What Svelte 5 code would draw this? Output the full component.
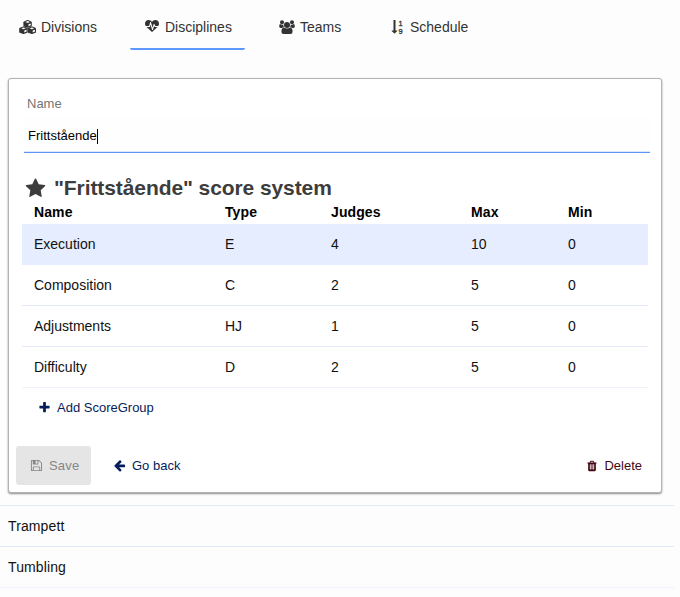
<script>
  const tabs = [
    { label: 'Divisions', icon: 'cubes' },
    { label: 'Disciplines', icon: 'heartbeat' },
    { label: 'Teams', icon: 'users' },
    { label: 'Schedule', icon: 'sort' },
  ];
  const scores = [
    ['Execution', 'E', 4, 10, 0],
    ['Composition', 'C', 2, 5, 0],
    ['Adjustments', 'HJ', 1, 5, 0],
    ['Difficulty', 'D', 2, 5, 0],
  ];
  const headings = ['Name', 'Type', 'Judges', 'Max', 'Min'];
  const others = ['Trampett', 'Tumbling'];
  const paths = {
    heartbeat: 'M1280 896h305q-5 6-10 10.5t-9 7.5l-3 4-623 600q-18 18-44 18t-44-18l-624-602q-5-2-21-20h369q22 0 39.5-13.5t22.5-34.5l70-281 190 667q6 20 23 33t39 13q21 0 38-13t23-33l146-485 56 112q18 35 57 35zm512-428q0 145-103 300h-369l-111-221q-8-17-25.5-27t-36.5-8q-45 5-56 46l-129 430-196-686q-6-20-23.5-33t-39.5-13-39 13.5-22 34.5l-116 464h-423q-103-155-103-300 0-220 127-344t351-124q62 0 126.5 21.5t120 58 95.5 68.5 76 68q36-36 76-68t95.5-68.5 120-58 126.5-21.5q224 0 351 124t127 344z',
    star: 'M1728 647q0 22-26 48l-363 354 86 500q1 7 1 20 0 21-10.5 35.5t-30.5 14.5q-19 0-40-12l-449-236-449 236q-22 12-40 12-21 0-31.5-14.5t-10.5-35.5q0-6 2-20l86-500-364-354q-25-27-25-48 0-37 56-46l502-73 225-455q19-41 49-41t49 41l225 455 502 73q56 9 56 46z',
    plus: 'M1600 736v192q0 40-28 68t-68 28h-416v416q0 40-28 68t-68 28h-192q-40 0-68-28t-28-68v-416h-416q-40 0-68-28t-28-68v-192q0-40 28-68t68-28h416v-416q0-40 28-68t68-28h192q40 0 68 28t28 68v416h416q40 0 68 28t28 68z',
    back: 'M1664 896v128q0 53-32.5 90.5t-84.5 37.5h-704l293 294q38 36 38 90t-38 90l-75 76q-37 37-90 37-52 0-91-37l-651-652q-37-37-37-90 0-52 37-91l651-650q38-38 91-38 52 0 90 38l75 74q38 38 38 91t-38 91l-293 293h704q52 0 84.5 37.5t32.5 90.5z',
    trash: 'M704 1376v-704q0-14-9-23t-23-9h-64q-14 0-23 9t-9 23v704q0 14 9 23t23 9h64q14 0 23-9t9-23zm256 0v-704q0-14-9-23t-23-9h-64q-14 0-23 9t-9 23v704q0 14 9 23t23 9h64q14 0 23-9t9-23zm256 0v-704q0-14-9-23t-23-9h-64q-14 0-23 9t-9 23v704q0 14 9 23t23 9h64q14 0 23-9t9-23zm-544-992h448l-48-117q-7-9-17-11h-317q-10 2-17 11zm928 32v64q0 14-9 23t-23 9h-96v948q0 83-47 143.5t-113 60.5h-832q-66 0-113-58.5t-47-141.5v-952h-96q-14 0-23-9t-9-23v-64q0-14 9-23t23-9h309l70-167q15-37 54-63t79-26h320q40 0 79 26t54 63l70 167h309q14 0 23 9t9 23z',
    save: 'M512 1536h768v-384h-768v384zm896 0h128v-896q0-14-10-38.5t-20-34.5l-281-281q-10-10-34-20t-39-10v416q0 40-28 68t-68 28h-576q-40 0-68-28t-28-68v-416h-128v1280h128v-416q0-40 28-68t68-28h832q40 0 68 28t28 68v416zm-384-928v-320q0-13-9.5-22.5t-22.5-9.5h-192q-13 0-22.5 9.5t-9.5 22.5v320q0 13 9.5 22.5t22.5 9.5h192q13 0 22.5-9.5t9.5-22.5zm640 32v928q0 40-28 68t-68 28h-1344q-40 0-68-28t-28-68v-1344q0-40 28-68t68-28h928q40 0 88 20t76 48l280 280q28 28 48 76t20 88z',
  };
  const cubes = [[4.2, 0], [0, 6.3], [8.4, 6.3]];
  let name = $state('Frittstående');
</script>

{#snippet icon(id, size)}
  <svg width={size} height={size} viewBox="0 0 1792 1792" fill="currentColor"><path d={paths[id]} /></svg>
{/snippet}

<div class="page">
  <nav>
    {#each tabs as tab, i}
      <a class="tab t{i}" class:active={i === 1}>
        {#if tab.icon === 'cubes'}
          <svg width="18" height="14" viewBox="0 0 18 14">
            {#each cubes as [x, y]}
              <g transform="translate({x} {y})">
                <path fill="currentColor" d="M4.2 .1Q4.5 0 4.8 .1L8 1.4Q8.6 1.7 8.6 2.3V5.6Q8.6 6.1 8.1 6.4L4.8 7.7Q4.5 7.8 4.2 7.7L.7 6.400Q.2 6.100.2 5.600V2.300Q.2 1.700.8 1.400Z" />
                <path fill="#fdfdfd" d="M4.500 1.100 6.800 2 4.500 2.900 2.200 2ZM5.300 4.300 7.600 3.400V5.300L5.300 6.300Z" />
              </g>
            {/each}
          </svg>
        {:else if tab.icon === 'users'}
          <svg width="16" height="14" viewBox="0 0 16 14" fill="currentColor">
            <circle cx="3" cy="2.2" r="2" /><circle cx="13" cy="2.2" r="2" />
            <path d="M1 4.1Q3 5.3 4.3 4.6 4.1 6 5 7.2 3.6 7.2 2.7 8H1.6Q.2 8 .2 6.6 .2 4.3 1 4.1ZM15 4.1Q13 5.3 11.7 4.6 11.9 6 11 7.2 12.4 7.2 13.3 8h1.1Q15.8 8 15.8 6.6 15.8 4.3 15 4.1Z" />
            <circle cx="8" cy="5" r="3" />
            <path d="M4.8 7.4Q8 9.6 11.2 7.4 13.6 7.7 13.6 11.7q0 2.2-2.2 2.2H4.6q-2.200 0-2.200-2.200 0-4 2.400-4.300Z" />
          </svg>
        {:else if tab.icon === 'sort'}
          <svg width="14" height="16" viewBox="0 0 14 16" fill="currentColor">
            <path d="M2.500 1h2v10.500H6.200q.4.100.1.500L3.700 14.500q-.2.200-.4 0L.7 12q-.3-.4.1-.5H2.500Z" />
            <text x="7.6" y="6.5">1</text><text x="7.6" y="15">9</text>
          </svg>
        {:else}
          {@render icon('heartbeat', 14)}
        {/if}
        <span>{tab.label}</span>
      </a>
    {/each}
  </nav>

  <section class="card">
    <label for="name">Name</label>
    <div class="field" id="name">{name}<i></i></div>
    <h2>{@render icon('star', 21)}<span>"{name}" score system</span></h2>
    <div class="grid head">
      {#each headings as h}<b>{h}</b>{/each}
    </div>
    {#each scores as row, i}
      <div class="grid row" class:selected={i === 0}>
        {#each row as cell}<span>{cell}</span>{/each}
      </div>
    {/each}
    <button class="add">{@render icon('plus', 13)}<span>Add ScoreGroup</span></button>
    <footer>
      <button class="save">{@render icon('save', 13)}<span>Save</span></button>
      <button class="back">{@render icon('back', 13)}<span>Go back</span></button>
      <button class="delete">{@render icon('trash', 12)}<span>Delete</span></button>
    </footer>
  </section>

  <div class="list">
    {#each others as item}<div>{item}</div>{/each}
  </div>
</div>

<style>
  :global(body) { background: #fdfdfd; }
  * { box-sizing: border-box; }
  .page { width: 680px; height: 597px; overflow: hidden; font: 14px/20px "Liberation Sans", Arial, sans-serif; color: #111; }
  svg { display: block; flex: none; }
  nav { display: flex; height: 50px; color: #333; }
  .tab { display: flex; align-items: center; height: 50px; padding-top: 6px; border-bottom: 2px solid transparent; border-radius: 2px; }
  .tab text { font-size: 7.4px; stroke: currentColor; stroke-width: .3px; }
  .t0 { width: 130px; padding-left: 19px; gap: 4px; }
  .t1 { width: 115px; padding-left: 15px; gap: 6px; }
  .t2 { width: 146px; padding-left: 34px; gap: 5px; }
  .t3 { gap: 5px; }
  .active { border-bottom-color: #5e97fb; }
  .card { width: 654px; height: 415px; margin: 28px 0 0 8px; padding: 0 13px; background: #fff; border: 1px solid #b3b3b3; border-radius: 3px; box-shadow: 0 1px 2px rgba(0, 0, 0, .45); }
  label { display: block; padding: 15px 0 0 5px; font-size: 13px; color: #757575; }
  .field { display: flex; align-items: center; width: 626px; height: 35px; margin: 4px 0 0 2px; padding: 2px 0 0 4px; font-size: 13px; color: #000; background: #fefefe; border-bottom: 1px solid #5e97fb; box-shadow: inset 0 -1px #dce8fe; }
  .field i { width: 1px; height: 15px; background: #000; }
  h2 { display: flex; align-items: center; gap: 8px; height: 26px; margin: 22px 0 0 3px; font-size: 21px; line-height: 26px; letter-spacing: -.09px; color: #3d3d3d; }
  .grid { display: grid; grid-template-columns: 191px 106px 140px 97px 1fr; width: 626px; padding-left: 12px; }
  .head { height: 23px; line-height: 23px; color: #000; letter-spacing: .1px; }
  .row { height: 41px; line-height: 40px; border-bottom: 1px solid #e2e9fa; }
  .row:nth-last-of-type(1) { border-color: #f0f2fb; }
  .row.selected { background: #e6edff; border-color: #e6edff; }
  button { display: flex; align-items: center; padding: 0; border: 0; background: none; font: 13px/20px "Liberation Sans", Arial, sans-serif; color: #061d5c; }
  .add { height: 39px; margin-left: 16px; gap: 6px; }
  footer { display: flex; height: 39px; margin: 19px -7px 0 -6px; }
  .save { width: 75px; padding-left: 14px; gap: 6px; background: #e5e5e5; color: #858585; border-radius: 3px; }
  .save span { letter-spacing: .2px; }
  .back { margin-left: 22px; gap: 6px; }
  .delete { margin-left: auto; margin-right: 13px; gap: 6px; color: #420713; }
  .list { width: 674px; margin-top: 12px; border-top: 1px solid #e1eafb; letter-spacing: .12px; }
  .list div { height: 41px; padding-left: 8px; line-height: 40px; border-bottom: 1px solid #e1eafb; }
  .list div:last-child { border-color: #f0f2fb; }
</style>
